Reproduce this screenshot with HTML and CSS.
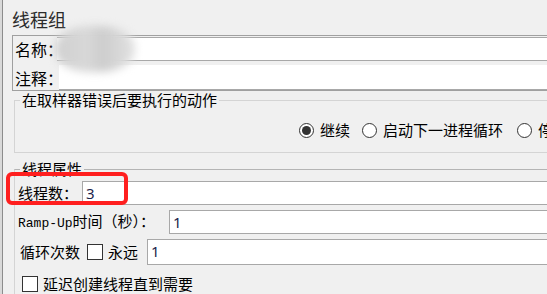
FILE: index.html
```html
<!DOCTYPE html>
<html lang="zh-CN">
<head>
    <meta charset="UTF-8">
    <title>线程组</title>
    <link rel="stylesheet" href="styles.css">
</head>
<body>

<div class="window">
    <h1 class="title">线程组</h1>

    <div class="info">
        <div class="info-row">
            <span class="info-label">名称：</span>
            <div class="field field-name"></div>
        </div>
        <div class="info-row">
            <span class="info-label">注释：</span>
            <div class="field field-comment"></div>
        </div>
        <!-- 打码的名称 -->
        <div class="mosaic"></div>
    </div>

    <fieldset class="group group-action">
        <legend>在取样器错误后要执行的动作</legend>
        <div class="radios">
            <span class="radio checked"></span><span class="radio-text">继续</span>
            <span class="radio"></span><span class="radio-text">启动下一进程循环</span>
            <span class="radio"></span><span class="radio-text">停止线程</span>
        </div>
    </fieldset>

    <fieldset class="group group-thread">
        <legend>线程属性</legend>

        <div class="row row-threads">
            <span class="lbl lbl-threads">线程数：</span>
            <div class="field field-input">3</div>
        </div>

        <div class="row row-ramp">
            <span class="lbl lbl-ramp"><span class="mono">Ramp-Up</span>时间（秒）：</span>
            <div class="field field-input">1</div>
        </div>

        <div class="row row-loop">
            <span class="lbl lbl-loop">循环次数</span>
            <span class="checkbox"></span>
            <span class="lbl lbl-forever">永远</span>
            <div class="field field-input">1</div>
        </div>

        <div class="row row-delay">
            <span class="checkbox"></span>
            <span class="lbl">延迟创建线程直到需要</span>
        </div>
    </fieldset>

    <div class="highlight"></div>
</div>

</body>
</html>
```

FILE: styles.css
```css
body {
    margin: 0;
    background-color: #d9d9d9;
    font-family: "Noto Sans CJK SC", "Noto Sans", sans-serif;
    font-size: 15px;
    color: #000;
    overflow: hidden;
    height: 294px;
}

.window {
    position: relative;
    margin-left: 2px;
    width: 620px;
    height: 294px;
    overflow: hidden;
    background-color: #f0f0f0;
    border-left: 1px solid #8c8c8c;
}

.title {
    margin: 0 0 4px 9px;
    padding-top: 7px;
    font-size: 18px;
    font-weight: normal;
    line-height: 24px;
    color: #2b2b2b;
}

/* 名称 / 注释 */
.info {
    position: relative;
    margin-left: 9px;
    padding-top: 1px;
    border: 1px solid #a0a0a0;
    border-right: none;
}

.info-row {
    display: flex;
    align-items: center;
}

.info-row + .info-row {
    margin-top: 4px;
}

.info-label {
    flex: none;
    width: 42px;
    padding-left: 2px;
    font-size: 16px;
    line-height: 20px;
    white-space: nowrap;
}

.field {
    flex: 1;
    box-sizing: border-box;
    background: #fff;
    border: 1px solid #a8a8a8;
    border-right: none;
    padding-left: 3px;
    font-family: "Noto Sans", "DejaVu Sans", sans-serif;
    font-size: 15px;
    line-height: 22px;
    color: #1b1f4a;
}

.field-name {
    height: 24px;
    border-left: none;
}

.field-comment {
    height: 25px;
    border-top: none;
    border-left: none;
    margin-left: 2px;
}

.mosaic {
    position: absolute;
    left: 42px;
    top: -10px;
    width: 80px;
    height: 46px;
    border-radius: 45%;
    background: linear-gradient(90deg, #d0d0d0 0%, #d8d8d8 40%, #cdcdcd 60%, #e2e2e2 100%);
    filter: blur(4px);
}

/* 分组 */
.group {
    margin: 0 0 0 11px;
    padding: 0;
    border: 1px solid #d4d4d4;
    border-right: none;
    min-inline-size: 0;
}

.group legend {
    margin-left: 5px;
    padding: 0 2px;
    line-height: 16px;
}

.group-action {
    margin-top: 1px;
    padding-bottom: 12px;
}

.radios {
    display: flex;
    align-items: center;
    height: 20px;
    margin-top: 12px;
    padding-left: 284px;
    white-space: nowrap;
}

.radio {
    flex: none;
    box-sizing: border-box;
    width: 15px;
    height: 15px;
    border: 1px solid #333;
    border-radius: 50%;
    background: #fff;
    position: relative;
}

.radio.checked::after {
    content: "";
    position: absolute;
    left: 2px;
    top: 2px;
    width: 9px;
    height: 9px;
    border-radius: 50%;
    background: #333;
}

.radio-text {
    flex: none;
    margin: 0 12px 0 6px;
    line-height: 20px;
}

.radio-text + .radio + .radio-text {
    margin-right: 14px;
}

.group-thread {
    margin-top: 8px;
    border-top-color: #b4b4b4;
    border-bottom: none;
    height: 140px;
}

.row {
    display: flex;
    align-items: center;
    padding-left: 3px;
}

.row-threads {
    margin-top: 4px;
}

.row-ramp,
.row-loop {
    margin-top: 5px;
}

.row-delay {
    margin-top: 9px;
    padding-left: 7px;
    height: 20px;
}

.lbl {
    flex: none;
    line-height: 20px;
    white-space: nowrap;
}

.lbl-threads {
    width: 64px;
}

.lbl-ramp {
    width: 151px;
}

.mono {
    font-family: "Liberation Mono", monospace;
    font-size: 13px;
}

.lbl-loop {
    padding-left: 2px;
    width: 67px;
}

.lbl-forever {
    margin-left: 5px;
    width: 39px;
}

.field-input {
    height: 24px;
    border-right: none;
}

.row-loop .field-input {
    height: 26px;
}

.checkbox {
    flex: none;
    box-sizing: border-box;
    width: 16px;
    height: 16px;
    border: 1px solid #333;
    background: #fff;
}

.row-delay .checkbox {
    margin-right: 5px;
}

/* 红框标注 */
.highlight {
    position: absolute;
    left: 3px;
    top: 172px;
    width: 122px;
    height: 33px;
    box-sizing: border-box;
    border: 4px solid #ff1f1f;
    border-radius: 6px;
}
```
